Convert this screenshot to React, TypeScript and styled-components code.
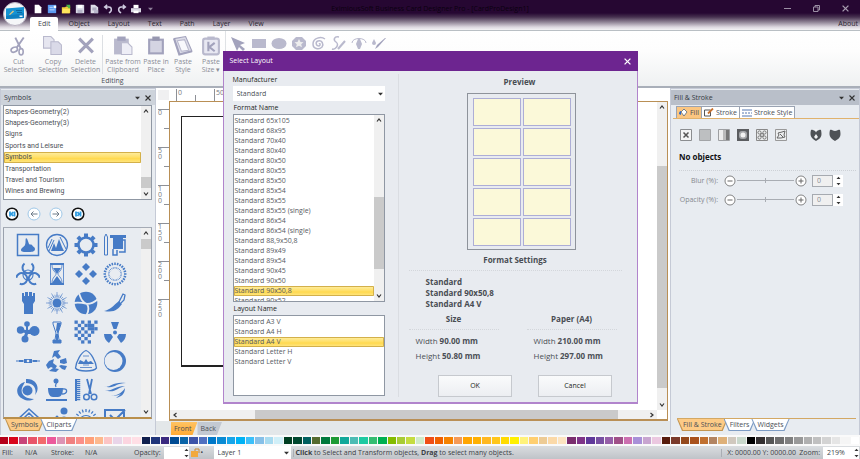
import React from "react";
import styled, { createGlobalStyle, css } from "styled-components";

const GlobalStyle = createGlobalStyle`
  * { box-sizing: border-box; }
  html, body { margin: 0; padding: 0; overflow: hidden; }
  body { font-family: "Open Sans", "Noto Sans", sans-serif; font-size: 7px; line-height: 8px; color: #4b4f56; }
  button, input, select { font: inherit; color: inherit; margin: 0; padding: 0; border: 0; background: none; border-radius: 0; }
  ul { list-style: none; margin: 0; padding: 0; }
  h1, h2, h3, p, dl, dd, dt { margin: 0; font-size: inherit; font-weight: inherit; }
  svg { display: block; flex: none; }
`;

/* ---------- shell ---------- */

const Page = styled.div`
  display: grid;
  grid-template-rows: auto auto 1fr auto auto;
  height: 100vh;
  background: #dfe3e8;
`;

const Header = styled.header`
  display: grid;
  grid-template-columns: 30px 1fr;
  height: 31px;
  background: linear-gradient(#260732 0, #260732 13px, #46304f 17px, #8e8294 22px, #dcd7df 27px, #fdfdfd 31px);
  border-bottom: 1px solid #b9bfc4;
`;

const LogoCell = styled.div`
  display: flex;
  justify-content: center;
  align-items: flex-start;
  padding: 2px 1px 0 0;
`;

const HeaderRows = styled.div`
  display: flex;
  flex-direction: column;
  min-width: 0;
`;

const TitleBar = styled.div`
  display: grid;
  grid-template-columns: 1fr auto 1fr;
  align-items: center;
  height: 17px;
`;

const QuickAccess = styled.div`
  display: flex;
  align-items: center;
  padding-left: 1px;
`;

const QuickButton = styled.button`
  display: flex;
  justify-content: center;
  width: 14px;
`;

const AppTitle = styled.h1`
  color: #0b010f;
  padding-right: 30px;
  white-space: nowrap;
`;

const WindowButtons = styled.div`
  display: flex;
  justify-content: flex-end;
`;

const WindowButton = styled.button`
  display: flex;
  justify-content: center;
  width: 29px;
`;

const RibbonTabs = styled.nav`
  display: flex;
  height: 14px;
  padding-right: 2px;
`;

const RibbonTab = styled.button<{ $active?: boolean }>`
  height: 14px;
  padding: 0 9px;
  color: #2c2632;
  ${(p) =>
    p.$active &&
    css`
      padding: 0 8px;
      margin-right: 1px;
      color: #46494f;
      background: #fff;
      border-radius: 2px 2px 0 0;
    `}
`;

const AboutTab = styled(RibbonTab)`
  margin-left: auto;
  padding: 0;
`;

/* ---------- ribbon ---------- */

const Ribbon = styled.section`
  display: flex;
  height: 57px;
  background: linear-gradient(#fff 0, #fdfdfd 20px, #eff1f2 100%);
  border-bottom: 2px solid #a9afb9;
`;

const RibbonGroup = styled.div`
  display: flex;
  flex-direction: column;
  align-items: center;
  border-right: 1px solid #dfe2e5;
`;

const RibbonItems = styled.div`
  display: flex;
  align-items: flex-start;
  padding-top: 4px;
  height: 46px;
`;

const RibbonButton = styled.button<{ $width: number }>`
  display: flex;
  flex-direction: column;
  align-items: center;
  gap: 1px;
  width: ${(p) => p.$width}px;
  color: #8b8d98;
  white-space: pre-line;
`;

const RibbonDivider = styled.span`
  width: 1px;
  height: 39px;
  background: #dcdfe3;
`;

const ToolRow = styled.div`
  display: flex;
  padding: 4px 4px 0 3px;
`;

const ToolButton = styled.button`
  display: flex;
  justify-content: center;
  width: 20px;
`;

/* ---------- work area ---------- */

const WorkArea = styled.main`
  display: grid;
  grid-template-columns: 156px minmax(0, 1fr) 190px;
  min-height: 0;
  background: #e3e7e9;
`;

const Panel = styled.aside`
  display: flex;
  flex-direction: column;
  min-height: 0;
  padding: 1px 3px 4px 2px;
  background: #e8ecf1;
  border: solid #c5cad6;
  border-width: 1px 1px 0;
`;

const PanelHeader = styled.header<{ $dark?: boolean }>`
  display: flex;
  align-items: center;
  gap: 5px;
  height: 15px;
  margin: 0 -3px 0 -2px;
  padding: 0 4px 0 3px;
  background: ${(p) => (p.$dark ? "#b9bfc9" : "#cdd3db")};
  color: #34383f;
`;

const PanelTitle = styled.h2`
  flex: 1;
`;

const IconButton = styled.button`
  display: flex;
`;

const ListFrame = styled.div<{ $height: number }>`
  display: flex;
  height: ${(p) => p.$height}px;
  border: 1px solid #8f97a3;
  background: #fff;
  overflow: hidden;
`;

const CategoryList = styled.ul`
  flex: 1;
  display: flex;
  flex-direction: column;
  padding: 0 0 2px;
  font-family: Roboto, sans-serif;
`;

const selected = css`
  background: linear-gradient(#fdeea6, #ffe06a 45%, #ffd94f 60%, #ffe88a);
  box-shadow: inset 0 0 0 1px #d3b04a;
  border-radius: 1px;
`;

const CategoryItem = styled.li<{ $selected?: boolean }>`
  flex: 1;
  display: flex;
  align-items: center;
  padding-left: 1px;
  ${(p) => p.$selected && selected}
`;

const NavRow = styled.div`
  display: flex;
  align-items: center;
  gap: 8px;
  height: 28px;
  padding-left: 2px;
  border-bottom: 1px solid #a5abb5;
`;

const ClipartFrame = styled.div`
  flex: 1;
  display: flex;
  min-height: 0;
  border: 1px solid #9aa1ad;
  border-top: 0;
  border-bottom: 2px solid #b98f4c;
  overflow: hidden;
`;

const ClipartGrid = styled.div`
  flex: 1;
  display: grid;
  grid-template-columns: repeat(4, 29px);
  grid-auto-rows: 29px;
  padding: 2px 0 0 9px;
`;

const ClipartButton = styled.button`
  display: flex;
  align-items: center;
  justify-content: center;
  color: #467bc6;
`;

const BottomTabs = styled.nav<{ $indent: number }>`
  display: flex;
  padding-left: ${(p) => p.$indent}px;
`;

const slant = "polygon(0 0, 100% 0, calc(100% - 5px) 100%, 5px 100%)";

const SlantTab = styled.button<{ $active?: boolean }>`
  position: relative;
  height: 12px;
  padding: 0 6px 1px;
  margin-right: -4px;
  background: ${(p) => (p.$active ? "#c39550" : "#7d9cc4")};
  clip-path: ${slant};
  z-index: 0;
  &::before {
    content: "";
    position: absolute;
    inset: 0 1px 1px;
    z-index: -1;
    background: ${(p) => (p.$active ? "#fdcb86" : "#fff")};
    clip-path: ${slant};
  }
`;

/* ---------- scroll bars ---------- */

const Scroll = styled.div<{ $horizontal?: boolean }>`
  display: flex;
  flex: none;
  flex-direction: ${(p) => (p.$horizontal ? "row" : "column")};
  align-items: stretch;
  background: #f0f0f0;
  ${(p) => (p.$horizontal ? "height: 9px;" : "width: 10px;")}
`;

const ScrollArrow = styled.button`
  display: flex;
  align-items: center;
  justify-content: center;
  width: 10px;
  height: 10px;
`;

const Grow = styled.span<{ $grow: number }>`
  flex: ${(p) => p.$grow} 1 0;
`;

const Thumb = styled(Grow)`
  background: #cacaca;
`;

/* ---------- canvas ---------- */

const CanvasColumn = styled.section`
  display: grid;
  grid-template-columns: 13px minmax(0, 1fr) 2px;
  grid-template-rows: 13px minmax(0, 1fr) auto;
  background: #fff;
  min-height: 0;
`;

const RulerCorner = styled.div`
  background: #f0f0f1;
  margin: 2px 0 1px 2px;
`;

const TopRuler = styled.div`
  display: flex;
  padding-left: 7px;
`;

const LeftRuler = styled.div`
  display: flex;
  flex-direction: column;
  align-items: flex-end;
  overflow: hidden;
  padding-top: 8px;
`;

const TopMark = styled.span<{ $major?: boolean }>`
  width: 19px;
  height: ${(p) => (p.$major ? 12 : 6)}px;
  align-self: flex-end;
  padding-left: 1px;
  border-left: 1px solid #8d9097;
  color: #777a80;
`;

const LeftMark = styled.span<{ $major?: boolean }>`
  flex: none;
  width: ${(p) => (p.$major ? 11 : 5)}px;
  height: 19px;
  border-top: 1px solid #8d9097;
  color: #777a80;
  line-height: 6px;
  white-space: pre;
`;

const Viewport = styled.div`
  display: grid;
  grid-template-columns: minmax(0, 1fr) 10px;
  grid-template-rows: minmax(0, 1fr) 9px;
  border: 1px solid #b98f55;
  border-bottom-width: 2px;
  background: #fff;
`;

const Artboard = styled.div`
  margin: 14px 40px 43px 11px;
  border: 1px solid #222;
  border-bottom-width: 2px;
  background: #fff;
`;

const SheetTabs = styled.nav`
  grid-column: 1 / -1;
  display: flex;
  height: 14px;
  padding: 1px 0 0 15px;
  background: #e3e7e9;
`;

const SheetTab = styled.button<{ $active?: boolean }>`
  padding: 0 6px 0 3px;
  clip-path: polygon(0 0, 100% 0, calc(100% - 5px) 100%, 0 100%);
  background: ${(p) => (p.$active ? "linear-gradient(#ffc363, #ffab34)" : "#c3c9d2")};
`;

/* ---------- fill & stroke ---------- */

const FillTabs = styled.nav`
  display: flex;
  padding: 1px 0 0 3px;
  margin-right: -3px;
  border-bottom: 1px solid #e0b26d;
`;

const FillTab = styled.button<{ $active?: boolean }>`
  display: flex;
  align-items: center;
  gap: 2px;
  height: 12px;
  padding: 0 2px;
  border: solid #9aa3b2;
  border-width: 1px 1px 0 ${(p) => (p.$active ? 1 : 0)}px;
  background: ${(p) => (p.$active ? "#fbc681" : "#fff")};
`;

const FillBody = styled.div`
  flex: 1;
  padding: 10px 0 0 6px;
`;

const FillModes = styled.div`
  display: flex;
  gap: 7px;
  padding-left: 1px;
  button:nth-child(7) { margin-left: 16px; }
`;

const ObjectState = styled.h3`
  margin-top: 10px;
  padding-bottom: 7px;
  border-bottom: 1px dotted #cdd1d6;
  font-size: 8px;
  font-weight: 700;
  line-height: 12px;
  color: #101114;
`;

const SliderRow = styled.div`
  display: grid;
  grid-template-columns: 44px 14px 57px 14px 4px 21px 10px;
  align-items: center;
  height: 19px;
  color: #85888e;
  white-space: nowrap;
`;

const SliderLabel = styled.label`
  text-align: right;
  padding-right: 5px;
`;

const RoundButton = styled.button`
  display: flex;
  justify-content: center;
`;

const Range = styled.input`
  appearance: none;
  width: 100%;
  height: 5px;
  background: linear-gradient(#a9adb3, #a9adb3) center / 100% 1px no-repeat;
  &::-webkit-slider-thumb { appearance: none; width: 1px; height: 5px; background: #a9adb3; }
`;

const NumberBox = styled.input`
  grid-column: 6;
  width: 21px;
  height: 12px;
  padding-left: 4px;
  border: 1px solid #a6aab0;
  background: #f0f0f0;
  color: #888b91;
`;

const SpinButton = styled.button`
  display: flex;
  align-items: center;
  justify-content: center;
  height: 12px;
  background: #fff;
`;

const TabsRule = styled.div`
  height: 1px;
  margin-left: 4px;
  background: #d3a864;
`;

/* ---------- palette and status ---------- */

const Palette = styled.div`
  display: flex;
  height: 11px;
  padding: 2px 0;
  background: #fafafa;
`;

const Swatch = styled.button<{ $color: string }>`
  flex: 1;
  background: ${(p) => p.$color};
  border-right: 1px solid #f6f6f6;
`;

const StatusBar = styled.footer`
  display: flex;
  align-items: center;
  height: 13px;
  padding: 0 1px 0 2px;
  background: linear-gradient(#dadde0, #bfc3c8);
  white-space: nowrap;
  color: #3b3f46;
`;

const StatusText = styled.span<{ $width?: number; $divide?: boolean }>`
  flex: none;
  ${(p) => p.$width && `width: ${p.$width}px;`}
  ${(p) =>
    p.$divide &&
    css`
      border-left: 1px solid #a9adb3;
      padding-left: 5px;
    `}
`;

const StatusHint = styled.p`
  flex: 1;
  margin-left: 2px;
  border-left: 1px solid #a9adb3;
  padding-left: 2px;
`;

const StatusLabel = styled.label`
  padding-right: 3px;
`;

const StatusInput = styled.input<{ $width: number }>`
  width: ${(p) => p.$width}px;
  height: 12px;
  background: #fff;
  padding-left: 4px;
`;

const SelectWrap = styled.span`
  position: relative;
  display: flex;
  align-items: center;
  svg {
    position: absolute;
    right: 2px;
    pointer-events: none;
  }
`;

const LayerSelect = styled.select`
  appearance: none;
  width: 77px;
  height: 13px;
  padding-left: 4px;
  background: #fff;
`;

/* ---------- dialog ---------- */

const Overlay = styled.div`
  position: fixed;
  inset: 0;
  display: flex;
  align-items: center;
  justify-content: center;
  padding-bottom: 4px;
`;

const Dialog = styled.section`
  width: 415px;
  background: #e8ebf0;
  border: solid #b184cc;
  border-width: 0 1px 2px;
`;

const DialogTitle = styled.header`
  display: flex;
  align-items: center;
  justify-content: space-between;
  height: 20px;
  margin: 0 -1px;
  padding: 0 7px;
  background: #6d2590;
  color: #fff;
`;

const DialogBody = styled.div`
  display: grid;
  grid-template-columns: 152px minmax(0, 1fr);
  gap: 13px;
  padding: 3px 6px 5px 9px;
`;

const ChoiceColumn = styled.div`
  display: flex;
  flex-direction: column;
`;

const FieldLabel = styled.label`
  height: 12px;
  line-height: 12px;
  color: #1c1e22;
`;

const MakerSelect = styled.select`
  appearance: none;
  width: 100%;
  height: 15px;
  padding-left: 4px;
  background: #fff;
`;

const ListLabel = styled.h3`
  height: 13px;
  line-height: 14px;
  padding-left: 1px;
  color: #1c1e22;
`;

const ChoiceList = styled.ul`
  flex: 1;
  padding: 1px 0;
`;

const ChoiceItem = styled.li<{ $selected?: boolean }>`
  height: 10px;
  line-height: 10px;
  padding-left: 1px;
  color: #565a62;
  ${(p) => p.$selected && selected}
`;

const Details = styled.div`
  border-left: 1px solid #dadde2;
  display: flex;
  flex-direction: column;
  align-items: stretch;
  padding-left: 10px;
`;

const Heading = styled.h3<{ $rule?: boolean }>`
  height: 19px;
  line-height: 15px;
  font-size: 8px;
  font-weight: 700;
  text-align: center;
  color: #494d53;
  ${(p) => p.$rule && "border-bottom: 1px dotted #d3d6db;"}
`;

const Sheet = styled.div`
  align-self: center;
  display: grid;
  grid-template-columns: 48px 48px;
  grid-auto-rows: 28px;
  gap: 2px;
  margin: 0 0 2px 4px;
  padding: 4px 4px 3px 5px;
  border: 1px solid #8e939b;
`;

const Card = styled.span`
  background: #fbf9d9;
  border: 1px solid #adaed6;
`;

const FormatSettings = styled.div`
  margin-right: 9px;
`;

const Summary = styled.div`
  padding: 5px 0 2px 17px;
  font-size: 8px;
  font-weight: 700;
  line-height: 11px;
  color: #494d53;
`;

const SizeColumns = styled.div`
  display: grid;
  grid-template-columns: 1fr 1fr;
  column-gap: 28px;
  margin-right: 5px;
`;

const Measures = styled.dl`
  padding: 3px 0 0 7px;
`;

const Measure = styled.div`
  display: flex;
  gap: 2px;
  height: 15px;
  line-height: 15px;
  font-size: 8px;
  white-space: nowrap;
  dd { font-weight: 700; }
`;

const Actions = styled.div`
  display: flex;
  justify-content: center;
  gap: 26px;
  padding: 12px 0 0 11px;
`;

const ActionButton = styled.button`
  width: 74px;
  height: 22px;
  border: 1px solid #c6c9ce;
  background: linear-gradient(#fafbfc, #eceef2);
  color: #1c1e22;
`;

/* ---------- icons ---------- */

const Chevron = ({ dir, size = 6 }: { dir: "up" | "down" | "left" | "right"; size?: number }) => {
  const d = { up: "M1 4.5 3 2l2 2.5", down: "M1 1.5 3 4l2-2.5", left: "M4.5 1 2 3l2.5 2", right: "M1.5 1 4 3 1.5 5" }[dir];
  return (
    <svg width={size} height={size} viewBox="0 0 6 6" fill="none" stroke="#333" strokeWidth="1.2">
      <path d={d} />
    </svg>
  );
};

const Caret = ({ color = "#333" }: { color?: string }) => (
  <svg width="5" height="4" viewBox="0 0 5 4">
    <path d="M0 .8h5L2.500 3.500z" fill={color} />
  </svg>
);

const Cross = ({ color = "#333", size = 6 }: { color?: string; size?: number }) => (
  <svg width={size} height={size} viewBox="0 0 6 6" stroke={color} strokeWidth="1.100">
    <path d="M.5.5l5 5M5.500.5l-5 5" />
  </svg>
);

const SpinArrows = () => (
  <svg width="5" height="10" viewBox="0 0 5 10" fill="#333">
    <path d="M.5 3 2.500.8 4.500 3zM.5 7l2 2.200L4.500 7z" />
  </svg>
);

const Logo = () => (
  <svg width="24" height="24" viewBox="0 0 24 24">
    <circle cx="12" cy="12" r="11.500" fill="#f5f6f8" stroke="#b9b3c2" />
    <path d="M3 6.500 21 5v11L3 17z" fill="#1593d3" />
    <path d="M3 14l18-3v5L3 17z" fill="#0e7fc0" />
    <path d="M6 12.500l4-4 1 1-4 3.500z" fill="#e8c77d" />
    <path d="M13 8.500h6M14 10.500h5" stroke="#0a5d94" strokeWidth=".8" />
    <path d="M16.500 13.500h3v1.500h-3z" fill="#dff2fb" />
  </svg>
);

const quickIcons: [string, React.ReactNode][] = [
  ["New", <path key="a" d="M2 1h5l3 3v7H2z" fill="#fff" />],
  ["Template", <g key="a"><path d="M1 1h10v10H1z" fill="#5b9af0" /><path d="M3 4h4M3 7h6" stroke="#cfe2ff" /><path d="M8 2h3v3H8z" fill="#fff" /></g>],
  ["Open", <g key="a"><path d="M1 4h4l1-1h5v8H1z" fill="#f2ce3c" /><path d="M6 1h5v4H9z" fill="#4cb648" /><path d="M2 6h9l-1 5H1z" fill="#ffe45c" /></g>],
  ["Save", <g key="a"><path d="M1 1h10v10H1z" fill="#d9d8e6" /><path d="M3 1h6v4H3z" fill="#fff" /><path d="M3 7h6v4H3z" fill="#b5b4c8" /></g>],
  ["Export", <g key="a"><path d="M2 1h5l4 3v7H2z" fill="#dedde9" /><path d="M4 5h5M4 7h5" stroke="#8885a0" /><path d="M6 7h5v4H6z" fill="#b9b7cc" /></g>],
  ["Undo", <path key="a" d="M5 1 2 3.500 5 6M2.500 3.500H7c4 0 4 6 0 7" fill="none" stroke="#cfcbe0" strokeWidth="1.800" />],
  ["Redo", <path key="a" d="M7 1l3 2.500L7 6M9.500 3.500H5c-4 0-4 6 0 7" fill="none" stroke="#cfcbe0" strokeWidth="1.800" />],
  ["Print", <g key="a"><path d="M3 1h6v4H3z" fill="#fff" /><path d="M0 5h12v5H0z" fill="#d9d7e3" /><path d="M3 8h6v3H3z" fill="#fff" /></g>],
];

const c = "#b9b9cd";
const cd = "#a2a2bc";
const ribbonIcons = {
  cut: <g fill="none" stroke={cd} strokeWidth="1.500"><path d="M6 2l5 10M14 2 7 12" strokeWidth="1.800" /><ellipse cx="5" cy="13.500" rx="3.200" ry="2.200" transform="rotate(-25 5 13.500)" /><ellipse cx="11.500" cy="15.500" rx="2" ry="3" /></g>,
  copy: <g stroke={c} fill="#e6e6f0"><path d="M.5 1h7l3 3v8H.5z" /><path d="M7.500 6h7l3 3v9h-10z" fill="#dadae8" /></g>,
  del: <path d="M3 3l13 13M16 3 3 16" stroke={cd} strokeWidth="3" />,
  paste: <g><path d="M1 3h14v15H1z" fill={c} /><path d="M4 1h8v4H4z" fill={cd} /><path d="M8 7h6l4 4v7H8z" fill="#eeeef6" stroke={c} /></g>,
  place: <g><path d="M2 3h15v15H2z" fill={cd} /><path d="M4 5h11v11H4z" fill="#d4d4e2" /><path d="M6 1h7v4H6z" fill="#9797b0" /></g>,
  style: <g><path d="M1 3l11-2 6 14-12 3z" fill="#dcdce8" stroke={cd} /><path d="M4 5l7-1 4 10-7 1z" fill="#f8f8fc" stroke={c} /><path d="M1 3l5 15 12-3" fill="none" stroke={cd} strokeWidth="2" /></g>,
  size: <g><rect x="2" y="3" width="15" height="15" rx="2" fill="#e8e8f2" stroke={c} strokeWidth="2" /><path d="M6 1h7v3H6z" fill={c} /><path d="M7 6v9M13 7l-5 4 5 4" fill="none" stroke={cd} strokeWidth="2" /></g>,
};

const toolIcons: [string, React.ReactNode][] = [
  ["Select", <path key="a" d="M0 1l14 6-5 2 5 4-2 2-4-4-2 4z" fill={cd} />],
  ["Rectangle", <path key="a" d="M1 3h14v9H1z" fill={c} />],
  ["Ellipse", <ellipse key="a" cx="8" cy="7.500" rx="7.500" ry="5.500" fill={c} />],
  ["Polygon", <g key="a"><path d="M5 1h6l4 4v5l-4 4H5l-4-4V5z" fill={c} /><path d="M8 3l1.500 3 3 .3-2.300 2 .8 3L8 9.800 5 11.300l.8-3-2.300-2 3-.3z" fill="#eee" /></g>],
  ["Spiral", <path key="a" d="M8 8c1-1 2 1 0 2-3 0-4-4-1-5 4-1 6 3 4 6-3 3-9 2-9-3 0-6 8-8 12-5" fill="none" stroke={c} strokeWidth="1.500" />],
  ["Curve", <g key="a" fill="none" stroke={c} strokeWidth="1.500"><path d="M8 1C3 0 2 4 5 6c4 3-1 8-4 7" /><path d="M14 5l-7 8" strokeWidth="2" /></g>],
  ["Pen", <g key="a"><path d="M1 7c0-6 14-6 14 0" fill="none" stroke={c} /><path d="M7 3h2l2 5-2 5H7L5 8z" fill={c} /></g>],
  ["Eyedropper", <g key="a"><path d="M3 3l2 4a2 2 0 1 1-4 0z" fill={c} /><path d="M15 2l-8 9-3 2 2-4 8-7z" fill={cd} /></g>],
];

const teeth = (n: number, r1: number, r2: number, w: number, cx = 12, cy = 12) =>
  Array.from({ length: n }, (_, i) => {
    const a = (i * 2 * Math.PI) / n;
    return <line key={i} x1={cx + r1 * Math.cos(a)} y1={cy + r1 * Math.sin(a)} x2={cx + r2 * Math.cos(a)} y2={cy + r2 * Math.sin(a)} stroke="currentColor" strokeWidth={w} />;
  });

const checks = ["1010101", "0101110", "1010111", "0101010", "1010100", "0101000", "0010100"];

const cliparts: [string, React.ReactNode][] = [
  ["Lake", <g key="a"><path d="M1.500 1.500h21v21h-21z" fill="none" stroke="currentColor" strokeWidth="1.500" /><path d="M10 5c2 1 2 4 3 6 1 1 2 0 3 1 1 2 3 2 3 4 0 3-4 3-7 3-4 0-7 0-7-2 0-2 3-3 4-5 1-3 0-5 1-7z" /></g>],
  ["Mountains", <g key="a"><circle cx="12" cy="12" r="10.500" fill="none" stroke="currentColor" strokeWidth="1.300" /><path d="M6 18l3-8 2 5 3-9 3 8 2 4z" /><path d="M4 18l5-11M3 15l4-9M15 4l6 12" stroke="currentColor" fill="none" /></g>],
  ["Gear", <g key="a"><circle cx="12" cy="12" r="7.500" fill="none" stroke="currentColor" strokeWidth="2.500" />{teeth(8, 8, 11.500, 4)}</g>],
  ["Drafting", <g key="a"><path d="M1.500 4 3 1l1.500 3v18h-3z" fill="none" stroke="currentColor" /><path d="M7 2h16v3h-3v11H10V5H7z" /><path d="M10 16v6h4v-5M20 7h2v12h-6" fill="none" stroke="currentColor" strokeWidth="1.500" /></g>],
  ["Biohazard", <g key="a" fill="none" stroke="currentColor" strokeWidth="2">{[0, 120, 240].map((r) => <path key={r} d="M8.500 1.500A5.500 5.500 0 1 0 15.500 1.500" transform={`rotate(${r} 12 13)`} />)}<circle cx="12" cy="13" r="5" strokeWidth="1.100" /></g>],
  ["Hourglass", <g key="a"><path d="M5 1h14v2H5zM5 21h14v2H5z" /><path d="M7 3c0 6 4 7 4 9s-4 3-4 9M17 3c0 6-4 7-4 9s4 3 4 9M5.500 3v18M18.500 3v18" fill="none" stroke="currentColor" strokeWidth=".8" /><path d="M8 6h8l-4 6zM12 14l5 7H7z" /></g>],
  ["Diamonds", <path key="a" d="M12 1l4 4-4 4-4-4zM12 15l4 4-4 4-4-4zM5 8l4 4-4 4-4-4zM19 8l4 4-4 4-4-4z" />],
  ["Burst", <g key="a">{teeth(24, 9, 11.500, 1.500)}{teeth(24, 5.500, 7, 0.800)}</g>],
  ["Fist", <path key="a" d="M6 2h2v3h1V1h3v4h1V1h3v4h1V2h2v8l-2 3v10H8V13l-2-3z" />],
  ["Sun", <g key="a"><circle cx="12" cy="12" r="4.500" />{teeth(24, 5.500, 8.500, 0.600)}{teeth(12, 5.500, 11, 0.600)}</g>],
  ["Trisected circle", <g key="a"><circle cx="12" cy="12" r="11.300" /><path d="M5 2c2 6 3 9 8 11 4 0 7-1 11-5M0 12c5-1 9 0 13 1 2 3 2 7-1 12" fill="none" stroke="#e8ecf1" strokeWidth="1.800" /></g>],
  ["Sabre", <g key="a"><path d="M1 20c6-1 10-6 15-10l3 3c-4 5-7 9-18 7z" /><path d="M16 11l4-8 2 1-1 5-3 3" fill="none" stroke="currentColor" strokeWidth="1.300" /></g>],
  ["Propeller", <g key="a"><circle cx="11" cy="4" r="2.800" /><circle cx="18.500" cy="11" r="5" /><circle cx="4.500" cy="10" r="3.700" /><circle cx="9" cy="19" r="3.500" /><path d="M10 6h2v4l4-1v5l-4 0-2 6-3-1 2-6-4-1V9l5 1z" /></g>],
  ["Vase", <g key="a"><path d="M8 2h8v2l-3 9 1 7h2v3H8v-3h2l1-7-3-9z" fill="none" stroke="currentColor" strokeWidth="1" /><path d="M12 3h4l-3 11-2-4zM8 20h8v3H8zM11 14h2v7h-2z" /></g>],
  ["Checker", <g key="a">{checks.flatMap((r, y) => [...r].map((v, x) => (v === "1" ? <rect key={`${x}-${y}`} x={0.500 + x * 3.300} y={0.500 + y * 3.300} width="3.300" height="3.300" /> : null)))}</g>],
  ["Radiation", <g key="a"><circle cx="12" cy="12.500" r="2" /><path d="M8 2h8l-2.500 7h-3zM1 14h7l2 3-4 6c-3-2-5-5-5-9zM23 14h-7l-2 3 4 6c3-2 5-5 5-9z" /></g>],
  ["Connector", <g key="a"><path d="M0 11.500h24v1H0zM3 11h4v2H3zM17 11h4v2h-4z" /><path d="M8 10h8v4H8z" /><circle cx="12" cy="12" r="1.300" fill="#e8ecf1" /></g>],
  ["Whirl", <g key="a"><path d="M9 2l6-1-2 3 3 4-3 2-3-3-3 2zM15 11l6-2 1 5-3 1-4-1zM16 16l6 1-2 4-3-1-3-3zM4 12l5-2-1 4 4 3-2 3-4-2-3 2-2-4zM8 19l6 1-3 3-7-1z" /></g>],
  ["Trail sign", <g key="a"><path d="M12 1.500C17 3 22 13 22.500 19c-3 4-18 4-21 0C2 13 7 3 12 1.500z" fill="none" stroke="currentColor" strokeWidth="1.300" /><path d="M4 15h16l-3-3-3 1-2-3-2 3-4-2z" /><path d="M9 7h6M6 18.500h12M9 16h6" stroke="currentColor" strokeWidth=".8" /></g>],
  ["Crescent", <g key="a"><circle cx="12" cy="12" r="11" /><circle cx="10.500" cy="12" r="9" fill="#e8ecf1" /></g>],
  ["Swirl", <g key="a"><circle cx="11.500" cy="12.500" r="5" /><path d="M10 1c10-1 15 9 9 16 2-6-1-12-9-12zM9 4c-9 2-11 13-2 17 4 2 7 2 11 0-8 0-14-4-12-11 1-3 2-4 3-6z" /></g>],
  ["Coffee", <g key="a"><path d="M3 10h15c0 6-2 9-5 9H8c-3 0-5-3-5-9zM1 21h21v2H1z" /><circle cx="11" cy="3" r="2.500" /><path d="M11 3c2 3-2 3 0 6M18 11c5-1 5 5-1 5" fill="none" stroke="currentColor" strokeWidth="1.300" /></g>],
  ["Comb and scissors", <g key="a"><path d="M1 1h2v22H1z" /><path d="M4.500 1v22" stroke="currentColor" strokeWidth="3.500" strokeDasharray="1.200 .8" /><path d="M13 1l4 15M18 1l-3 15" fill="none" stroke="currentColor" strokeWidth="1.800" /><circle cx="12.500" cy="19" r="2.800" fill="none" stroke="currentColor" strokeWidth="1.500" /><circle cx="20" cy="19" r="2.800" fill="none" stroke="currentColor" strokeWidth="1.500" /></g>],
  ["Wind", <g key="a"><path d="M1 8c6 3 7-5 22-3-11 0-12 7-22 3zM2 12c7 2 9-4 20-4-8 2-11 8-20 4zM8 17c5 2 12-3 14-7 0 6-4 9-9 10l5-4c-4 2-7 2-10 1z" /></g>],
  ["Roof", <path key="a" d="M1 13 13 2l10 9M4 15l9-9 8 8M7 17l6-7 6 6" fill="none" stroke="currentColor" strokeWidth="1.500" />],
  ["Figure", <g key="a"><circle cx="19" cy="4" r="3.500" /><circle cx="19" cy="13" r="3.500" /><circle cx="12" cy="10" r="1.500" /></g>],
  ["Sunrise", <g key="a"><path d="M5 16c0-10 14-10 14 0" fill="none" stroke="currentColor" strokeWidth="1.200" />{teeth(20, 9, 12, 1.300, 12, 14)}</g>],
  ["Tick", <path key="a" d="M2 3h19v19H2zM7 8l5 5L22 3" fill="none" stroke="currentColor" strokeWidth="2" />],
];

const fillIcons: [string, React.ReactNode][] = [
  ["None", <g key="a"><path d="M.5.5h11v11H.5z" fill="#f4f5f6" stroke="#8b8d90" /><path d="M3.500 3.500l5 5M8.500 3.500l-5 5" stroke="#555" strokeWidth="1.500" /></g>],
  ["Solid", <path key="a" d="M.5.5h11v11H.5z" fill="#bdbfc1" stroke="#a2a4a7" />],
  ["Linear", <g key="a"><path d="M.5.5h11v11H.5z" fill="#eee" stroke="#9d9fa2" /><path d="M5 1h3v10H5z" fill="#bbb" /><path d="M8 1h3v10H8z" fill="#777" /></g>],
  ["Radial", <g key="a"><path d="M0 0h12v12H0z" fill="#5b5d60" /><rect x="2" y="2" width="8" height="8" rx="3" fill="#a5a7aa" /><circle cx="6" cy="6" r="2.500" fill="#f2f2f2" /></g>],
  ["Pattern", <g key="a"><path d="M.5.5h11v11H.5z" fill="#eceeef" stroke="#888" /><g fill="none" stroke="#777"><circle cx="3.500" cy="3.500" r="1.600" /><circle cx="8.500" cy="3.500" r="1.600" /><circle cx="3.500" cy="8.500" r="1.600" /><circle cx="8.500" cy="8.500" r="1.600" /><circle cx="6" cy="6" r="1.500" /></g></g>],
  ["Texture", <g key="a"><path d="M.5.5h11v11H.5z" fill="#eceeef" stroke="#999" /><path d="M2 9l2-3-1-2 4-1 3-1-1 4 1 2-4 1zM5 5l3 3" fill="none" stroke="#666" /></g>],
  ["Even-odd", <g key="a"><path d="M1 1c2-1 3 1 5 1s3-2 5-1c1 5 1 8-5 11C0 9 0 5 1 1z" fill="#4e5256" /><path d="M4 0l2 3.500L8 0zM6 5l2 3-2 2-2-2z" fill="#f0f2f4" /></g>],
  ["Winding", <path key="a" d="M1 1c2-1 3 1 5 1s3-2 5-1c1 5 1 8-5 11C0 9 0 5 1 1z" fill="#4e5256" />],
];

/* ---------- data ---------- */

const ribbonTabs = ["Edit", "Object", "Layout", "Text", "Path", "Layer", "View"];
const categories = ["Shapes-Geometry(2)", "Shapes-Geometry(3)", "Signs", "Sports and Leisure", "Symbols", "Transportation", "Travel and Tourism", "Wines and Brewing"];
const formats = ["65x105", "68x95", "70x40", "80x40", "80x50", "80x55", "85x50", "85x54", "85x55", "85x55 (single)", "86x54", "86x54 (single)", "88,9x50,8", "89x49", "89x54", "90x45", "90x50", "90x50,8", "90x52"];
const layouts = ["A3 V", "A4 H", "A4 V", "Letter H", "Letter V"];

const colors = (
  "b5001a d8061c c8457a e8556a f26a6c ec5a9c dd93b4 f08080 fb8f88 ffa07a fdb98e fcc5c5 e9d5e9 fcd5e0 ffdfe6 " +
  "101f4e 20357b 3b2a80 004b93 0a64a8 3d54a8 5070c0 0078c8 0a8bd4 16a5ea 00b2f5 3cc0fa 86c0e8 a8dbf0 d0eff8 " +
  "003f22 00482f 00605f 556b2f 007a3d 1c9a35 12a89a 4cbcb4 1fcaa2 35bd71 00b050 84bc00 a8cc35 c5dc40 d0ebc8 " +
  "f04e16 f06000 f58200 f59a56 ffa500 ffb000 ffb820 ffc61a ffdb00 fff000 fff27a ffcf70 edcb95 fbd9a8 fde4c0 " +
  "7a2d6e 7f3488 60399a 7850a2 965fa8 a05088 cc70b0 a890d8 c8a5d0 ebc8e0 " +
  "581c0c 7b3a2b 94481c a9511c c07030 b28462 deb078 d0c8be c9d8cc " +
  "000000 332f30 555555 6d6d6d 808080 999999 b0b0b0 c0c0c0 d3d3d3 e5e5e5 f5f5f5 ffffff"
).split(" ");

/* ---------- parts ---------- */

const ScrollBar = ({ before, thumb, after, horizontal }: { before: number; thumb: number; after: number; horizontal?: boolean }) => (
  <Scroll $horizontal={horizontal}>
    <ScrollArrow aria-label="Scroll back"><Chevron dir={horizontal ? "left" : "up"} /></ScrollArrow>
    <Grow $grow={before} />
    <Thumb $grow={thumb} />
    <Grow $grow={after} />
    <ScrollArrow aria-label="Scroll forward"><Chevron dir={horizontal ? "right" : "down"} /></ScrollArrow>
  </Scroll>
);

const RibbonCommand = ({ icon, label, width }: { icon: keyof typeof ribbonIcons; label: string; width: number }) => (
  <RibbonButton $width={width}>
    <svg width="20" height="22" viewBox="0 0 19 20">{ribbonIcons[icon]}</svg>
    {label}
  </RibbonButton>
);

const Nav = ({ label, strong, d }: { label: string; strong?: boolean; d: string }) => (
  <IconButton aria-label={label}>
    <svg width="14" height="14" viewBox="0 0 14 14" fill="none">
      <circle cx="7" cy="7" r={strong ? 5.800 : 6} fill="#fff" stroke={strong ? "#111" : "#9fc8e8"} strokeWidth={strong ? 1.500 : 1} />
      <path d={d} stroke={strong ? "#2d9be0" : "#6c7a88"} strokeWidth={strong ? 1.800 : 1} />
    </svg>
  </IconButton>
);

const RoundGlyph = ({ d }: { d: string }) => (
  <svg width="12" height="12" viewBox="0 0 12 12" fill="#fff" stroke="#666">
    <circle cx="6" cy="6" r="5" strokeWidth=".8" />
    <path d={d} />
  </svg>
);

const SliderField = ({ id, label }: { id: string; label: string }) => (
  <SliderRow>
    <SliderLabel htmlFor={id}>{label}</SliderLabel>
    <RoundButton aria-label="Decrease"><RoundGlyph d="M3.500 6h5" /></RoundButton>
    <Range type="range" aria-label={`${label} slider`} defaultValue={50} />
    <RoundButton aria-label="Increase"><RoundGlyph d="M3.500 6h5M6 3.500v5" /></RoundButton>
    <NumberBox id={id} defaultValue="0" />
    <SpinButton aria-label={`Step ${label}`}><SpinArrows /></SpinButton>
  </SliderRow>
);

const SelectLayout = () => (
  <Overlay>
    <Dialog role="dialog" aria-label="Select Layout">
      <DialogTitle>
        <h2>Select Layout</h2>
        <IconButton aria-label="Close"><Cross color="#fff" size={7} /></IconButton>
      </DialogTitle>
      <DialogBody>
        <ChoiceColumn>
          <FieldLabel htmlFor="maker">Manufacturer</FieldLabel>
          <SelectWrap>
            <MakerSelect id="maker"><option>Standard</option></MakerSelect>
            <Caret />
          </SelectWrap>
          <ListLabel>Format Name</ListLabel>
          <ListFrame $height={188}>
            <ChoiceList role="listbox" aria-label="Format Name">
              {formats.map((f) => (
                <ChoiceItem key={f} role="option" aria-selected={f === "90x50,8"} $selected={f === "90x50,8"}>Standard {f}</ChoiceItem>
              ))}
            </ChoiceList>
            <ScrollBar before={72} thumb={71} after={22} />
          </ListFrame>
          <ListLabel>Layout Name</ListLabel>
          <ListFrame $height={81}>
            <ChoiceList role="listbox" aria-label="Layout Name">
              {layouts.map((f) => (
                <ChoiceItem key={f} role="option" aria-selected={f === "A4 V"} $selected={f === "A4 V"}>Standard {f}</ChoiceItem>
              ))}
            </ChoiceList>
          </ListFrame>
        </ChoiceColumn>
        <Details>
          <Heading>Preview</Heading>
          <Sheet>
            {Array.from({ length: 10 }, (_, i) => <Card key={i} />)}
          </Sheet>
          <FormatSettings>
            <Heading $rule>Format Settings</Heading>
            <Summary>
              <p>Standard</p>
              <p>Standard 90x50,8</p>
              <p>Standard A4 V</p>
            </Summary>
            <SizeColumns>
              {[["Size", "90.00 mm", "50.80 mm"], ["Paper (A4)", "210.00 mm", "297.00 mm"]].map(([title, w, h]) => (
                <div key={title}>
                  <Heading $rule>{title}</Heading>
                  <Measures>
                    <Measure><dt>Width</dt><dd>{w}</dd></Measure>
                    <Measure><dt>Height</dt><dd>{h}</dd></Measure>
                  </Measures>
                </div>
              ))}
            </SizeColumns>
          </FormatSettings>
          <Actions>
            <ActionButton>OK</ActionButton>
            <ActionButton>Cancel</ActionButton>
          </Actions>
        </Details>
      </DialogBody>
    </Dialog>
  </Overlay>
);

const SymbolsPanel = () => (
  <Panel>
    <PanelHeader>
      <PanelTitle>Symbols</PanelTitle>
      <IconButton aria-label="Panel menu"><Caret /></IconButton>
      <IconButton aria-label="Close panel"><Cross /></IconButton>
    </PanelHeader>
    <ListFrame $height={95}>
      <CategoryList role="listbox" aria-label="Categories">
        {categories.map((n) => (
          <CategoryItem key={n} role="option" aria-selected={n === "Symbols"} $selected={n === "Symbols"}>{n}</CategoryItem>
        ))}
      </CategoryList>
      <ScrollBar before={62} thumb={11} after={1} />
    </ListFrame>
    <NavRow>
      <Nav label="First" strong d="M5 4.500v5M9.500 4.500v5M8 5 6.500 7 8 9" />
      <Nav label="Previous" d="M10.500 7H4M6.500 4.500 4 7l2.500 2.500" />
      <Nav label="Next" d="M3.500 7H10M7.500 4.500 10 7 7.500 9.500" />
      <Nav label="Last" strong d="M5 4.500v5M9.500 4.500v5M6.500 5 8 7 6.500 9" />
    </NavRow>
    <ClipartFrame>
      <ClipartGrid>
        {cliparts.map(([name, art]) => (
          <ClipartButton key={name} aria-label={name}>
            <svg width="24" height="24" viewBox="0 0 24 24" fill="currentColor">{art}</svg>
          </ClipartButton>
        ))}
      </ClipartGrid>
      <ScrollBar before={1} thumb={10} after={152} />
    </ClipartFrame>
    <BottomTabs $indent={2}>
      <SlantTab $active>Symbols</SlantTab>
      <SlantTab>Cliparts</SlantTab>
    </BottomTabs>
  </Panel>
);

const Canvas = () => (
  <CanvasColumn>
    <RulerCorner />
    <TopRuler>
      <TopMark $major>0</TopMark>
      <TopMark />
      <TopMark $major>50</TopMark>
    </TopRuler>
    <span />
    <LeftRuler>
      {["0", "50", "100", "150", "200", "250"].map((n) => (
        <React.Fragment key={n}>
          <LeftMark $major>{[...n].join("\n")}</LeftMark>
          {n !== "250" && <LeftMark />}
        </React.Fragment>
      ))}
    </LeftRuler>
    <Viewport>
      <Artboard />
      <ScrollBar before={54} thumb={220} after={12} />
      <ScrollBar horizontal before={75} thumb={363} after={29} />
    </Viewport>
    <span />
    <SheetTabs>
      <SheetTab $active>Front</SheetTab>
      <SheetTab>Back</SheetTab>
    </SheetTabs>
  </CanvasColumn>
);

const FillPanel = () => (
  <Panel>
    <PanelHeader $dark>
      <PanelTitle>Fill &amp; Stroke</PanelTitle>
      <IconButton aria-label="Panel menu"><Caret /></IconButton>
      <IconButton aria-label="Close panel"><Cross /></IconButton>
    </PanelHeader>
    <FillTabs>
      <FillTab $active>
        <svg width="9" height="9" viewBox="0 0 9 9"><path d="M2 4l3-3 3 3-3 4z" fill="#fff" stroke="#567" strokeWidth=".8" /><path d="M0 6c0-2 1-3 2-3v4z" fill="#2a68c8" /></svg>
        Fill
      </FillTab>
      <FillTab>
        <svg width="10" height="9" viewBox="0 0 10 9"><path d="M.5 2h6v6h-6z" fill="#fff" stroke="#555" /><path d="M4 5.500 9 .5" stroke="#c9702c" strokeWidth="1.800" /></svg>
        Stroke
      </FillTab>
      <FillTab>
        <svg width="10" height="8" viewBox="0 0 10 8" stroke="#5577b0"><path d="M0 1h10M0 7h10" /><path d="M0 4h10" strokeDasharray="2 1" /></svg>
        Stroke Style
      </FillTab>
    </FillTabs>
    <FillBody>
      <FillModes>
        {fillIcons.map(([n, art]) => (
          <IconButton key={n} aria-label={n}><svg width="12" height="12" viewBox="0 0 12 12">{art}</svg></IconButton>
        ))}
      </FillModes>
      <ObjectState>No objects</ObjectState>
      <SliderField id="blur" label="Blur (%):" />
      <SliderField id="opacity" label="Opacity (%):" />
    </FillBody>
    <TabsRule />
    <BottomTabs $indent={4}>
      <SlantTab $active>Fill &amp; Stroke</SlantTab>
      <SlantTab>Filters</SlantTab>
      <SlantTab>Widgets</SlantTab>
    </BottomTabs>
  </Panel>
);

export default function App() {
  return (
    <>
      <GlobalStyle />
      <Page>
        <Header>
          <LogoCell><Logo /></LogoCell>
          <HeaderRows>
            <TitleBar>
              <QuickAccess>
                {quickIcons.map(([n, art]) => (
                  <QuickButton key={n} aria-label={n}><svg width="10" height="10" viewBox="0 0 12 12">{art}</svg></QuickButton>
                ))}
                <QuickButton aria-label="Customize"><Caret color="#8d7f99" /></QuickButton>
              </QuickAccess>
              <AppTitle>EximiousSoft Business Card Designer Pro - [CardProDesign1]</AppTitle>
              <WindowButtons>
                <WindowButton aria-label="Minimize"><svg width="7" height="7" viewBox="0 0 7 7" stroke="#9b8fa4"><path d="M0 3.500h7" /></svg></WindowButton>
                <WindowButton aria-label="Restore"><svg width="7" height="7" viewBox="0 0 7 7" stroke="#9b8fa4" fill="none"><path d="M.5 2h4.500v4.500H.5zM2 2V.5h4.500V5H5" /></svg></WindowButton>
                <WindowButton aria-label="Close"><Cross color="#a89db0" size={7} /></WindowButton>
              </WindowButtons>
            </TitleBar>
            <RibbonTabs>
              {ribbonTabs.map((t, i) => <RibbonTab key={t} $active={i === 0}>{t}</RibbonTab>)}
              <AboutTab>About</AboutTab>
            </RibbonTabs>
          </HeaderRows>
        </Header>
        <Ribbon>
          <RibbonGroup>
            <RibbonItems>
              <RibbonCommand icon="cut" label={"Cut\nSelection"} width={37} />
              <RibbonCommand icon="copy" label={"Copy\nSelection"} width={32} />
              <RibbonCommand icon="del" label={"Delete\nSelection"} width={33} />
              <RibbonDivider />
              <RibbonCommand icon="paste" label={"Paste from\nClipboard"} width={40} />
              <RibbonCommand icon="place" label={"Paste in\nPlace"} width={26} />
              <RibbonCommand icon="style" label={"Paste\nStyle"} width={28} />
              <RibbonCommand icon="size" label={"Paste\nSize ▾"} width={28} />
            </RibbonItems>
            <span>Editing</span>
          </RibbonGroup>
          <ToolRow>
            {toolIcons.map(([n, art]) => (
              <ToolButton key={n} aria-label={n}><svg width="16" height="17" viewBox="0 0 16 15">{art}</svg></ToolButton>
            ))}
          </ToolRow>
        </Ribbon>
        <WorkArea>
          <SymbolsPanel />
          <Canvas />
          <FillPanel />
        </WorkArea>
        <Palette>
          {colors.map((k, i) => <Swatch key={i} $color={`#${k}`} aria-label={`#${k}`} />)}
        </Palette>
        <StatusBar>
          <StatusText $width={23}>Fill:</StatusText>
          <StatusText $width={26}>N/A</StatusText>
          <StatusText $width={34}>Stroke:</StatusText>
          <StatusText $width={49}>N/A</StatusText>
          <StatusLabel htmlFor="layer-opacity">Opacity:</StatusLabel>
          <StatusInput id="layer-opacity" $width={20} />
          <SpinButton aria-label="Step opacity"><SpinArrows /></SpinButton>
          <IconButton aria-label="Lock layer">
            <svg width="12" height="11" viewBox="0 0 12 11"><path d="M2 4h7v6H2z" fill="#f2a93b" /><path d="M6 4V2h4v4" fill="none" stroke="#c98a35" /></svg>
          </IconButton>
          <StatusText $width={13}>•</StatusText>
          <SelectWrap>
            <LayerSelect aria-label="Layer"><option>Layer 1</option></LayerSelect>
            <Caret />
          </SelectWrap>
          <StatusHint><b>Click</b> to Select and Transform objects, <b>Drag</b> to select many objects.</StatusHint>
          <StatusText $width={78} $divide>X: 0000.00 Y: 0000.00</StatusText>
          <StatusLabel htmlFor="zoom">Zoom:</StatusLabel>
          <StatusInput id="zoom" $width={31} defaultValue="219%" />
          <SpinButton aria-label="Step zoom"><SpinArrows /></SpinButton>
        </StatusBar>
      </Page>
      <SelectLayout />
    </>
  );
}
